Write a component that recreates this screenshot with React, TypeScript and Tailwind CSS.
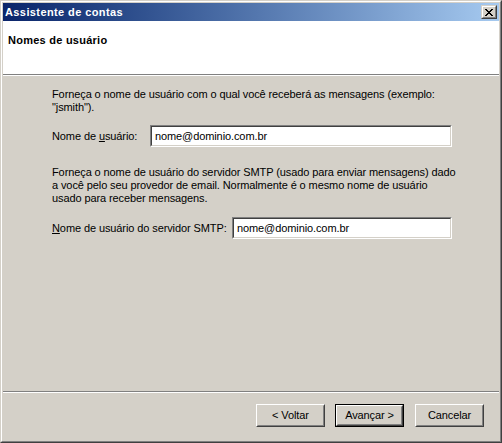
import React from "react";

function CloseGlyph() {
  // classic 8x7 "X"
  const rows = [
    "XX....XX",
    ".XX..XX.",
    "..XXXX..",
    "...XX...",
    "..XXXX..",
    ".XX..XX.",
    "XX....XX",
  ];
  return (
    <svg width="8" height="7" viewBox="0 0 8 7" shapeRendering="crispEdges">
      {rows.flatMap((r, y) =>
        r.split("").map((c, x) => (c === "X" ? <rect key={`${x}-${y}`} x={x} y={y} width="1" height="1" fill="#000" /> : null))
      )}
    </svg>
  );
}

function Field({ width, value }: { width: string; value: string }) {
  return (
    <div className={`${width} h-[22px] border border-t-[#808080] border-l-[#808080] border-r-white border-b-white`}>
      <div className="h-full border border-t-[#404040] border-l-[#404040] border-r-[#d4d0c8] border-b-[#d4d0c8] bg-white flex items-center">
        <input
          readOnly
          value={value}
          className="w-full bg-transparent outline-none pl-[3px] text-[11px] leading-[13px] tracking-[-0.1px] text-black font-['Liberation_Sans',Arial,sans-serif]"
        />
      </div>
    </div>
  );
}

function Btn({ label, isDefault = false }: { label: string; isDefault?: boolean }) {
  if (isDefault) {
    return (
      <div className="w-[69px] h-[23px] border border-black">
        <div className="h-full border border-t-white border-l-white border-r-[#404040] border-b-[#404040]">
          <div className="h-full flex items-center justify-center border border-t-[#d4d0c8] border-l-[#d4d0c8] border-r-[#808080] border-b-[#808080]">
            {label}
          </div>
        </div>
      </div>
    );
  }
  return (
    <div className="w-[69px] h-[23px] border border-t-white border-l-white border-r-[#404040] border-b-[#404040]">
      <div className="h-full flex items-center justify-center border border-t-[#d4d0c8] border-l-[#d4d0c8] border-r-[#808080] border-b-[#808080]">
        {label}
      </div>
    </div>
  );
}

export default function App() {
  return (
    <div className="w-[502px] h-[443px] flex border border-t-[#d4d0c8] border-l-[#d4d0c8] border-r-[#404040] border-b-[#404040] text-[11px] leading-[13px] tracking-[-0.1px] text-black font-['Liberation_Sans',Arial,sans-serif] select-none">
      <div className="flex-1 flex flex-col p-px bg-[#d4d0c8] border border-t-white border-l-white border-r-[#808080] border-b-[#808080]">
        {/* title bar */}
        <div className="h-[18px] flex items-center justify-between pl-[2px] pr-[2px] bg-gradient-to-r from-[#0a246a] to-[#a6caf0]">
          <span className="text-white font-bold tracking-[0.4px]">Assistente de contas</span>
          <div className="w-[16px] h-[14px] border border-t-[#d4d0c8] border-l-[#d4d0c8] border-r-[#404040] border-b-[#404040] bg-[#d4d0c8]">
            <div className="h-full flex items-center justify-center border border-t-white border-l-white border-r-[#808080] border-b-[#808080]">
              <CloseGlyph />
            </div>
          </div>
        </div>

        {/* header */}
        <div className="h-[53px] bg-white pl-[5px] pt-[13px]">
          <div className="font-bold tracking-[0.25px]">Nomes de usuário</div>
        </div>
        <div className="h-px bg-[#808080]" />
        <div className="h-px bg-white" />

        {/* body */}
        <div className="flex-1 pl-[49px] pt-[12px]">
          <p className="whitespace-nowrap">
            Forneça o nome de usuário com o qual você receberá as mensagens (exemplo:
            <br />
            "jsmith").
          </p>
          <div className="mt-[11px] flex items-center">
            <span className="w-[98px]">
              Nome de <span className="underline">u</span>suário:
            </span>
            <Field width="w-[302px]" value="nome@dominio.com.br" />
          </div>

          <p className="mt-[19px] whitespace-nowrap">
            Forneça o nome de usuário do servidor SMTP (usado para enviar mensagens) dado
            <br />
            a você pelo seu provedor de email. Normalmente é o mesmo nome de usuário
            <br />
            usado para receber mensagens.
          </p>
          <div className="mt-[12px] flex items-center">
            <span className="w-[180px]">
              <span className="underline">N</span>ome de usuário do servidor SMTP:
            </span>
            <Field width="w-[220px]" value="nome@dominio.com.br" />
          </div>
        </div>

        <div className="h-px bg-[#808080]" />
        <div className="h-px bg-white" />

        {/* buttons */}
        <div className="h-[47px] flex items-start justify-end pt-[11px] pr-[15px] gap-[10px]">
          <Btn label="< Voltar" />
          <Btn label="Avançar >" isDefault />
          <div className="ml-px">
            <Btn label="Cancelar" />
          </div>
        </div>
      </div>
    </div>
  );
}
